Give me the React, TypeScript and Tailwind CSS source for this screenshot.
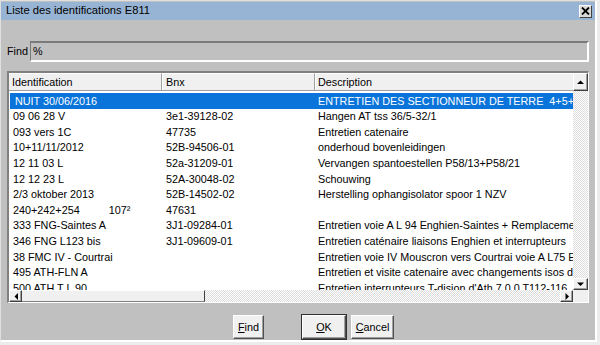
import React from 'react';

const rows: [string, string, string][] = [
  ['NUIT 30/06/2016', '', 'ENTRETIEN DES SECTIONNEUR DE TERRE  4+5+6+7'],
  ['09 06 28 V', '3e1-39128-02', 'Hangen AT tss 36/5-32/1'],
  ['093 vers 1C', '47735', 'Entretien catenaire'],
  ['10+11/11/2012', '52B-94506-01', 'onderhoud bovenleidingen'],
  ['12 11 03 L', '52a-31209-01', 'Vervangen spantoestellen P58/13+P58/21'],
  ['12 12 23 L', '52A-30048-02', 'Schouwing'],
  ['2/3 oktober 2013', '52B-14502-02', 'Herstelling ophangisolator spoor 1 NZV'],
  ['240+242+254', '47631', ''],
  ['333 FNG-Saintes A', '3J1-09284-01', 'Entretien voie A L 94 Enghien-Saintes + Remplacement'],
  ['346 FNG L123 bis', '3J1-09609-01', 'Entretien caténaire liaisons Enghien et interrupteurs'],
  ['38 FMC IV - Courtrai', '', 'Entretien voie IV Mouscron vers Courtrai voie A L75 EN'],
  ['495 ATH-FLN A', '', "Entretien et visite catenaire avec changements isos d'Ath"],
  ['500 ATH T L 90', '', "Entretien interrupteurs T-disjon d'Ath 7.0.0 T112-116"],
];

function Arrow({ dir }: { dir: 'up' | 'down' | 'left' | 'right' }) {
  const pts = {
    up: '0,4 7,4 3.5,0.5',
    down: '0,0.5 7,0.5 3.5,4',
    left: '4,0 4,7 0.5,3.5',
    right: '0.5,0 0.5,7 4,3.5',
  }[dir];
  const w = dir === 'up' || dir === 'down' ? 7 : 4;
  const h = dir === 'up' || dir === 'down' ? 4 : 7;
  return (
    <svg width={w} height={h} viewBox={`0 0 ${w} ${h}`}>
      <polygon points={pts} fill="#000" />
    </svg>
  );
}

// raised 3D button used for scrollbar arrows
function ScrollBtn({ dir, className }: { dir: 'up' | 'down' | 'left' | 'right'; className: string }) {
  return (
    <div
      className={`flex items-center justify-center bg-[#f0f0f0] border-t border-l border-t-white border-l-white border-b border-r border-b-[#404040] border-r-[#404040] shadow-[inset_-1px_-1px_0_#a0a0a0] ${className}`}
    >
      <Arrow dir={dir} />
    </div>
  );
}

const dither =
  'bg-[repeating-conic-gradient(#ffffff_0_25%,#dcdcdc_0_50%)] bg-[length:2px_2px]';

function DlgButton({ children, primary }: { children: React.ReactNode; primary?: boolean }) {
  return (
    <div className={primary ? 'border border-[#303030]' : 'border border-transparent'}>
      <div className="h-[24px] flex items-center justify-center bg-[#f0f0f0] border-t border-l border-t-white border-l-white border-b border-r border-b-[#505050] border-r-[#505050] shadow-[inset_-1px_-1px_0_#a0a0a0] px-[6px]">
        {children}
      </div>
    </div>
  );
}

export default function App() {
  return (
    <div className="w-[600px] h-[345px] bg-[#ececec] font-['Liberation_Sans',Arial,sans-serif] text-[10.8px] text-black overflow-hidden">
      <div className="w-[597px] h-[342px] bg-[#c0c0c0] border-t border-l border-t-[#e0e0e0] border-l-[#e0e0e0] border-r-2 border-b-2 border-r-white border-b-white flex flex-col">
        {/* Title bar */}
        <div className="h-[18px] mt-px bg-[#98b4d4] flex items-center justify-between pl-[5px] pr-[3px]">
          <span className="text-[11.2px] leading-none">Liste des identifications E811</span>
          <div className="w-[13px] h-[13px] bg-[#d8d8d8] border-t border-l border-t-white border-l-white border-b border-r border-b-[#404040] border-r-[#404040] flex items-center justify-center">
            <svg width="9" height="8" viewBox="0 0 9 8">
              <path d="M1 0.5 L8 7.5 M8 0.5 L1 7.5" stroke="#000" strokeWidth="1.8" />
            </svg>
          </div>
        </div>

        <div className="flex flex-col px-[6px]">
          {/* Find row */}
          <div className="flex items-center mt-[21px] h-[21px]">
            <span className="pr-[2px]">Find</span>
            <div className="flex-1 h-[21px] flex items-center border-t-2 border-l border-t-[#7a7a7a] border-l-[#7a7a7a] border-b-2 border-r-2 border-b-white border-r-white pl-[2px]">
              %
            </div>
          </div>

          {/* List */}
          <div className="mt-[9px] h-[232px] border-t-2 border-l-2 border-t-[#808080] border-l-[#808080] border-b border-r border-b-white border-r-white flex">
            <div className="flex-1 flex flex-col bg-white overflow-hidden">
              <div className="h-[18px] flex bg-[#f0f0f0] shrink-0 border-b border-b-[#a0a0a0]">
                <div className="w-[153px] border-r border-r-[#a0a0a0] border-t border-t-white pl-[3px] flex items-center">Identification</div>
                <div className="w-[153px] border-r border-r-[#a0a0a0] border-l border-l-white border-t border-t-white pl-[3px] flex items-center">Bnx</div>
                <div className="flex-1 border-l border-l-white border-t border-t-white pl-[2px] flex items-center">Description</div>
              </div>
              <div className="flex-1 pt-[2px] pl-px overflow-hidden">
                {rows.map((r, i) => (
                  <div
                    key={i}
                    className={`h-[15.6px] flex items-center whitespace-nowrap ${i === 0 ? 'bg-[#0a74da] text-white' : ''}`}
                  >
                    <div className={`w-[153px] shrink-0 ${i === 0 ? 'pl-[5px]' : 'pl-[3px]'}`}>
                      {r[0]}
                      {i === 7 && <span className="ml-[29px]">107²</span>}
                    </div>
                    <div className="w-[153px] shrink-0 pl-[3px]">{r[1]}</div>
                    <div className="pl-[2px] whitespace-pre">{r[2]}</div>
                  </div>
                ))}
              </div>
              <div className="h-[12px] shrink-0 flex">
                <ScrollBtn dir="left" className="w-[13px] h-[12px]" />
                <div className="w-[183px] bg-[#f0f0f0] border-t border-t-white border-b border-b-[#808080] border-r border-r-[#404040]" />
                <div className={`flex-1 ${dither}`} />
                <ScrollBtn dir="right" className="w-[13px] h-[12px]" />
              </div>
            </div>
            <div className="w-[15px] flex flex-col">
              <ScrollBtn dir="up" className="h-[18px]" />
              <div className={`flex-1 ${dither}`} />
              <ScrollBtn dir="down" className="h-[12px]" />
              <div className="h-[12px] bg-[#f0f0f0]" />
            </div>
          </div>

          {/* Buttons */}
          <div className="mt-[11px] h-[26px] flex items-center">
            <div className="ml-[225px] w-[33px]">
              <DlgButton>
                <span><span className="underline">F</span>ind</span>
              </DlgButton>
            </div>
            <div className="ml-[36px] w-[46px]">
              <DlgButton primary>
                <span><span className="underline">O</span>K</span>
              </DlgButton>
            </div>
            <div className="ml-[3px] w-[45px]">
              <DlgButton>
                <span><span className="underline">C</span>ancel</span>
              </DlgButton>
            </div>
          </div>
        </div>
      </div>
    </div>
  );
}
